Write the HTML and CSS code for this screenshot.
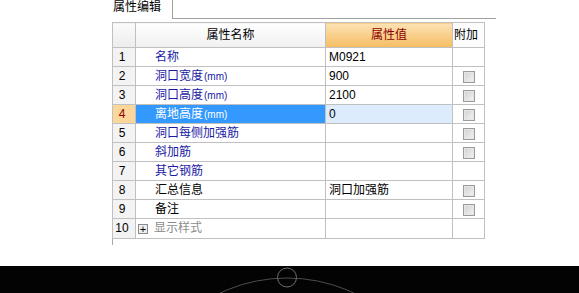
FILE: index.html
```html
<!DOCTYPE html>
<html lang="zh-CN">
<head>
    <meta charset="UTF-8">
    <title>属性编辑</title>
    <link rel="stylesheet" href="styles.css">
</head>
<body>
<div id="panel">
    <div class="tabbar">
        <span class="tab">属性编辑</span>
        <span class="tabline"></span>
    </div>
    <div class="frame">
        <table class="grid">
            <colgroup>
                <col class="c-no">
                <col class="c-name">
                <col class="c-val">
                <col class="c-ext">
            </colgroup>
            <tr class="head">
                <td class="no"></td>
                <td class="h-name">属性名称</td>
                <td class="h-val">属性值</td>
                <td class="h-ext">附加</td>
            </tr>
            <tr>
                <td class="no">1</td>
                <td class="name blue">名称</td>
                <td class="val">M0921</td>
                <td class="ext"></td>
            </tr>
            <tr>
                <td class="no">2</td>
                <td class="name blue">洞口宽度<small>(mm)</small></td>
                <td class="val">900</td>
                <td class="ext"><i class="chk"></i></td>
            </tr>
            <tr>
                <td class="no">3</td>
                <td class="name blue">洞口高度<small>(mm)</small></td>
                <td class="val">2100</td>
                <td class="ext"><i class="chk"></i></td>
            </tr>
            <tr class="active">
                <td class="no">4</td>
                <td class="name">离地高度<small>(mm)</small></td>
                <td class="val">0</td>
                <td class="ext"><i class="chk"></i></td>
            </tr>
            <tr>
                <td class="no">5</td>
                <td class="name blue">洞口每侧加强筋</td>
                <td class="val"></td>
                <td class="ext"><i class="chk"></i></td>
            </tr>
            <tr>
                <td class="no">6</td>
                <td class="name blue">斜加筋</td>
                <td class="val"></td>
                <td class="ext"><i class="chk"></i></td>
            </tr>
            <tr>
                <td class="no">7</td>
                <td class="name blue">其它钢筋</td>
                <td class="val"></td>
                <td class="ext"></td>
            </tr>
            <tr>
                <td class="no">8</td>
                <td class="name">汇总信息</td>
                <td class="val">洞口加强筋</td>
                <td class="ext"><i class="chk"></i></td>
            </tr>
            <tr>
                <td class="no">9</td>
                <td class="name">备注</td>
                <td class="val"></td>
                <td class="ext"><i class="chk"></i></td>
            </tr>
            <tr class="last">
                <td class="no">10</td>
                <td class="name gray"><i class="plus">+</i>显示样式</td>
                <td class="val"></td>
                <td class="ext"></td>
            </tr>
        </table>
    </div>
</div>
<div id="view">
    <svg width="579" height="27" viewBox="0 0 579 27">
        <circle cx="287" cy="169" r="157" fill="none" stroke="#4d4d4d" stroke-width="1"/>
        <circle cx="287" cy="11.5" r="9.5" fill="none" stroke="#6e6e6e" stroke-width="1"/>
    </svg>
</div>
</body>
</html>
```

FILE: styles.css
```css
*{
    margin: 0;
    padding: 0;
    box-sizing: border-box;
}
body{
    background: #fff;
    font-family: "Liberation Sans", "Noto Sans CJK SC", sans-serif;
    font-size: 12px;
    color: #000;
    width: 579px;
    height: 293px;
    overflow: hidden;
}
#panel{
    padding-left: 112px;
    width: 496px;
}
.tabbar{
    display: flex;
    height: 19px;
}
.tab{
    width: 61px;
    padding-left: 1px;
    line-height: 15px;
    border-right: 1px solid #a0a0a0;
}
.tabline{
    flex: 1;
    border-bottom: 1px solid #a0a0a0;
}
.frame{
    margin-top: 3px;
    height: 223px;
    border-left: 1px solid #a8a8a8;
}
.grid{
    border-collapse: collapse;
    margin-left: -1px;
    table-layout: fixed;
    width: 372px;
}
.c-no{ width: 23px; }
.c-name{ width: 190px; }
.c-val{ width: 127px; }
.c-ext{ width: 32px; }
.grid td{
    border: 1px solid #c0c0c0;
    height: 19px;
    line-height: 17px;
    white-space: nowrap;
    overflow: hidden;
}
.grid .head td{
    height: 25px;
    line-height: 22px;
}
.grid .last td{
    height: 20px;
}
.no{
    background: #f3f3f3;
    text-align: center;
    padding-right: 4px;
}
.head .no{
    background: linear-gradient(#fbfbfb, #ececec);
}
.h-name{
    text-align: center;
    background: linear-gradient(#ffffff, #f0f0f0);
}
.h-val{
    text-align: center;
    color: #8b0000;
    background: linear-gradient(#fce2b4, #f5bd62);
}
.h-ext{
    padding-left: 1px;
    background: #fdfdfd;
}
.name{
    padding-left: 19px;
}
.name small{
    font-size: 10px;
    margin-left: 1px;
}
.blue{
    color: #1a1aa6;
}
.gray{
    color: #8c8c8c;
    padding-left: 2px;
}
.val{
    padding-left: 3px;
}
.ext{
    text-align: center;
}
.chk{
    display: inline-block;
    width: 12px;
    height: 12px;
    margin-top: 3px;
    vertical-align: top;
    border: 1px solid #9a9a9a;
    background: linear-gradient(135deg, #d0d0d0, #f4f4f4);
    box-shadow: inset 0 0 0 1px #e6e6e6;
}
.plus{
    display: inline-block;
    width: 10px;
    height: 10px;
    margin: 4px 6px 0 0;
    vertical-align: top;
    border: 1px solid #8a8a8a;
    background: #eeeeee;
    color: #000;
    font-style: normal;
    font-size: 11px;
    line-height: 8px;
    text-align: center;
}
.active .no{
    background: #fcd79c;
    color: #8b0000;
}
.active .name{
    background: #3399ff;
    color: #fff;
}
.active .val{
    background: #dcecfc;
}
#view{
    margin-top: 21px;
    height: 27px;
    background: #030303;
}
#view svg{
    display: block;
}
```
